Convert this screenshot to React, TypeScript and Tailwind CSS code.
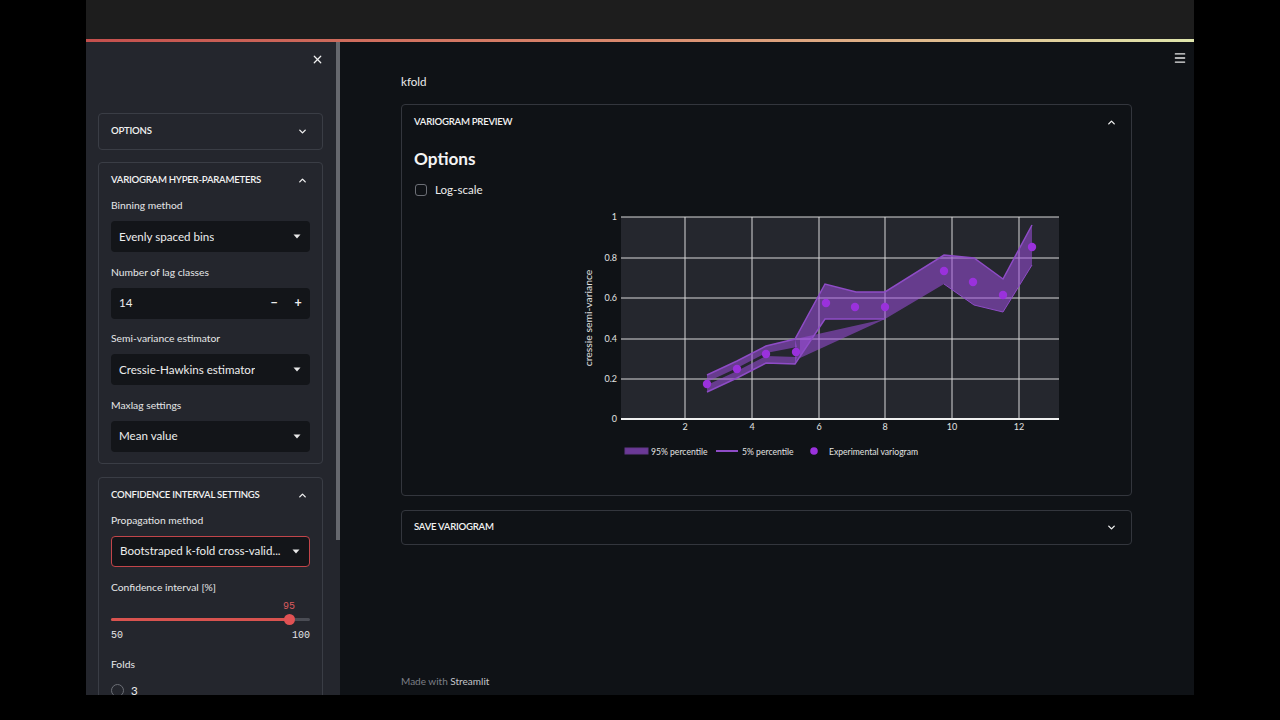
import React from "react";
import { ChevronDown, ChevronUp, X, Menu } from "lucide-react";

function Caret() {
  return (
    <svg width="8" height="5" viewBox="0 0 8 5" className="shrink-0">
      <path d="M0.5 0.5 L7.5 0.5 L4 4.5 Z" fill="#e8e8e8" />
    </svg>
  );
}

function SideExpander({
  title,
  open,
  children,
  className,
}: {
  title: string;
  open: boolean;
  children?: React.ReactNode;
  className?: string;
}) {
  return (
    <div className={"border border-[#3a3d45] rounded-[4px] " + (className ?? "")}>
      <div className="h-[35px] pl-[12px] pr-[14px] flex items-center justify-between">
        <span className="text-[9.6px] font-semibold tracking-[-0.25px] text-[#f2f2f2] uppercase">
          {title}
        </span>
        {open ? (
          <ChevronUp size={11} strokeWidth={3} color="#f0f0f0" />
        ) : (
          <ChevronDown size={11} strokeWidth={3} color="#f0f0f0" />
        )}
      </div>
      {open && <div className="px-[12px] pb-[11px]">{children}</div>}
    </div>
  );
}

function Label({ children }: { children: React.ReactNode }) {
  return (
    <div className="h-[16px] flex items-center text-[10.3px] text-[#e6e6e8]">
      {children}
    </div>
  );
}

function Select({ value, red }: { value: string; red?: boolean }) {
  return (
    <div
      className={
        "mt-[7px] h-[31px] rounded-[4px] bg-[#131519] flex items-center justify-between pl-[8px] pr-[9px] " +
        (red ? "border border-[#c2454a]" : "")
      }
    >
      <span className="text-[11.6px] text-[#ededed] whitespace-nowrap overflow-hidden">{value}</span>
      <Caret />
    </div>
  );
}

function Chart() {
  const xs = [
    { v: "2", x: 685 },
    { v: "4", x: 752 },
    { v: "6", x: 819 },
    { v: "8", x: 885 },
    { v: "10", x: 952 },
    { v: "12", x: 1019 },
  ];
  const ys = [
    { v: "1", y: 216 },
    { v: "0.8", y: 257 },
    { v: "0.6", y: 297 },
    { v: "0.4", y: 338 },
    { v: "0.2", y: 378 },
  ];
  const dots = [
    [707, 383],
    [737, 368],
    [766, 353],
    [796, 351],
    [826, 302],
    [855, 306],
    [885, 306],
    [944, 270],
    [973, 281],
    [1003, 294],
    [1032, 246],
  ];
  const fill = "#9d4edd";
  const op = 0.55;
  return (
    <svg width="705" height="262" viewBox="414 204 705 262" className="block">
      <rect x="621" y="216" width="438" height="202" fill="#25272e" />
      {xs.map((t) => (
        <line key={t.v} x1={t.x} x2={t.x} y1={216} y2={418} stroke="#d8d8d8" strokeWidth="1" />
      ))}
      {ys.map((t) => (
        <line key={t.v} x1={621} x2={1059} y1={t.y} y2={t.y} stroke="#d8d8d8" strokeWidth="1" />
      ))}
      <line x1={621} x2={1059} y1={418} y2={418} stroke="#f0f0f0" strokeWidth="2" />
      <polygon
        points="795,338 825,283 856,291 885,291 944,254 974,257 1003,278 1032,224 1032,264 1003,311 974,304 944,283 885,318 825,318 795,363"
        fill={fill}
        opacity={op}
      />
      <polygon
        points="707,374 737,360 766,345 795,338 797,346 766,352 737,367 707,381"
        fill={fill}
        opacity={op}
      />
      <polygon
        points="707,391 737,377 766,362 795,363 797,356 766,355 737,370 707,384"
        fill={fill}
        opacity={op}
      />
      <polygon points="800,337 885,318 800,357" fill={fill} opacity={op} />
      <polyline
        points="707,374 737,360 766,345 795,338 825,283 856,291 885,291 944,254 974,257 1003,278 1032,224"
        fill="none"
        stroke="#8e4cc6"
        strokeWidth="1.5"
      />
      <polyline
        points="707,391 737,377 766,362 795,363 825,318 885,318"
        fill="none"
        stroke="#8e4cc6"
        strokeWidth="1.5"
      />
      <polyline
        points="944,283 974,304 1003,311 1032,264"
        fill="none"
        stroke="#8e4cc6"
        strokeWidth="1"
      />
      {dots.map(([x, y], i) => (
        <circle key={i} cx={x} cy={y} r="4.2" fill="#9a31dc" />
      ))}
      <g fontFamily="Lato, sans-serif" fontSize="9" fill="#e2e2e2">
        {ys.map((t) => (
          <text key={t.v} x={617} y={t.y + 3} textAnchor="end">
            {t.v}
          </text>
        ))}
        <text x={617} y={421} textAnchor="end">
          0
        </text>
        {xs.map((t) => (
          <text key={t.v} x={t.x} y={429} textAnchor="middle">
            {t.v}
          </text>
        ))}
      </g>
      <text
        x={0}
        y={0}
        transform="translate(591.5,317) rotate(-90)"
        textAnchor="middle"
        fontFamily="Lato, sans-serif"
        fontSize="10.4"
        fill="#e2e2e2"
      >
        cressie semi-variance
      </text>
      <g fontFamily="Lato, sans-serif" fontSize="8.6" fill="#e2e2e2">
        <rect x="625" y="447" width="23" height="6" fill={fill} opacity={op + 0.1} stroke="#8e4cc6" strokeWidth="1" />
        <text x="651" y="453.5">95% percentile</text>
        <line x1="716" x2="738" y1="450" y2="450" stroke="#8e4cc6" strokeWidth="2" />
        <text x="742" y="453.5">5% percentile</text>
        <circle cx="814" cy="450" r="3.8" fill="#9a31dc" />
        <text x="829" y="453.5">Experimental variogram</text>
      </g>
    </svg>
  );
}

export default function App() {
  return (
    <div className="w-[1280px] h-[720px] bg-black overflow-hidden font-['Lato',sans-serif]">
      <div className="ml-[86px] w-[1108px] h-[695px] flex flex-col">
        <div className="h-[39px] bg-[#1d1d1d]" />
        <div className="h-[3px] bg-linear-to-r from-[#c44f4d] via-[#d98a6e] to-[#dfe6ac]" />
        <div className="flex flex-1 min-h-0">
          {/* Sidebar */}
          <aside className="w-[254px] bg-[#24262d] relative overflow-hidden">
            <div className="absolute right-0 top-0 w-[4px] h-[498px] bg-[#66686e]" />
            <div className="h-[34px] flex items-center justify-end pr-[16px]">
              <X size={13} strokeWidth={2.2} color="#f0f0f0" />
            </div>
            <div className="pl-[12px] w-[237px] mt-[37px] flex flex-col">
              <SideExpander title="Options" open={false} />
              <SideExpander title="Variogram hyper-parameters" open className="mt-[12px]">
                <Label>Binning method</Label>
                <Select value="Evenly spaced bins" />
                <div className="mt-[12.5px]">
                  <Label>Number of lag classes</Label>
                  <div className="mt-[7px] h-[31px] rounded-[4px] bg-[#131519] flex items-center pl-[8px]">
                    <span className="flex-1 text-[11.6px] text-[#ededed]">14</span>
                    <span className="w-[24px] text-center text-[12.5px] font-bold text-[#ededed]">−</span>
                    <span className="w-[24px] text-center text-[12.5px] font-bold text-[#ededed]">+</span>
                  </div>
                </div>
                <div className="mt-[12.5px]">
                  <Label>Semi-variance estimator</Label>
                  <Select value="Cressie-Hawkins estimator" />
                </div>
                <div className="mt-[12.5px]">
                  <Label>Maxlag settings</Label>
                  <Select value="Mean value" />
                </div>
              </SideExpander>
              <SideExpander title="Confidence interval settings" open className="mt-[13px]">
                <Label>Propagation method</Label>
                <Select value="Bootstraped k-fold cross-valid..." red />
                <div className="mt-[13px]">
                  <Label>Confidence interval [%]</Label>
                  <div className="relative h-[45px]">
                    <div className="absolute left-[172px] top-[3px] text-[10px] font-['Liberation_Mono',monospace] text-[#d95a5d]">
                      95
                    </div>
                    <div className="absolute left-0 right-0 top-[22px] h-[3px] rounded-full bg-[#4a4c54]" />
                    <div className="absolute left-0 w-[179px] top-[22px] h-[3px] rounded-full bg-[#d9534f]" />
                    <div className="absolute left-[173px] top-[18px] w-[11px] h-[11px] rounded-full bg-[#e05254]" />
                    <div className="absolute left-0 right-0 top-[32px] flex justify-between text-[10px] font-['Liberation_Mono',monospace] text-[#e4e4e6]">
                      <span>50</span>
                      <span>100</span>
                    </div>
                  </div>
                </div>
                <div className="mt-[16px]">
                  <Label>Folds</Label>
                  <div className="mt-[9px] flex items-center gap-[7px]">
                    <div className="w-[13px] h-[13px] rounded-full border border-[#6c6f76]" />
                    <span className="text-[11.6px] text-[#ededed]">3</span>
                  </div>
                </div>
              </SideExpander>
            </div>
          </aside>

          {/* Main */}
          <main className="flex-1 bg-[#0f1216] relative overflow-hidden">
            <div className="absolute right-[7px] top-[9px]">
              <Menu size={14} strokeWidth={2.2} color="#e8e8e8" />
            </div>
            <div className="w-[731px] ml-[61px] pt-[32px]">
              <div className="h-[16px] flex items-center text-[11.6px] text-[#ececec]">kfold</div>
              <div className="mt-[14px] border border-[#33363d] rounded-[4px]">
                <div className="h-[35px] pl-[12px] pr-[14px] flex items-center justify-between">
                  <span className="text-[9.6px] font-semibold tracking-[-0.25px] text-[#f2f2f2] uppercase">
                    Variogram preview
                  </span>
                  <ChevronUp size={11} strokeWidth={3} color="#f0f0f0" />
                </div>
                <div className="px-[12px] pb-[28px]">
                  <div className="mt-[7px] h-[24px] flex items-center text-[17.2px] font-bold text-[#f4f4f4]">
                    Options
                  </div>
                  <div className="mt-[11px] h-[16px] flex items-center gap-[8px] pl-[1px]">
                    <div className="w-[12px] h-[12px] rounded-[3px] border border-[#6c6f76]" />
                    <span className="text-[11.6px] text-[#ececec]">Log-scale</span>
                  </div>
                  <div className="mt-[7px]">
                    <Chart />
                  </div>
                </div>
              </div>
              <div className="mt-[14px] h-[35px] border border-[#33363d] rounded-[4px] pl-[12px] pr-[14px] flex items-center justify-between">
                <span className="text-[9.6px] font-semibold tracking-[-0.25px] text-[#f2f2f2] uppercase">
                  Save variogram
                </span>
                <ChevronDown size={11} strokeWidth={3} color="#f0f0f0" />
              </div>
              <div className="mt-[128px] h-[16px] flex items-center text-[10px] text-[#7c7f86]">
                Made with&nbsp;<span className="text-[#c4c6ca]">Streamlit</span>
              </div>
            </div>
          </main>
        </div>
      </div>
    </div>
  );
}
